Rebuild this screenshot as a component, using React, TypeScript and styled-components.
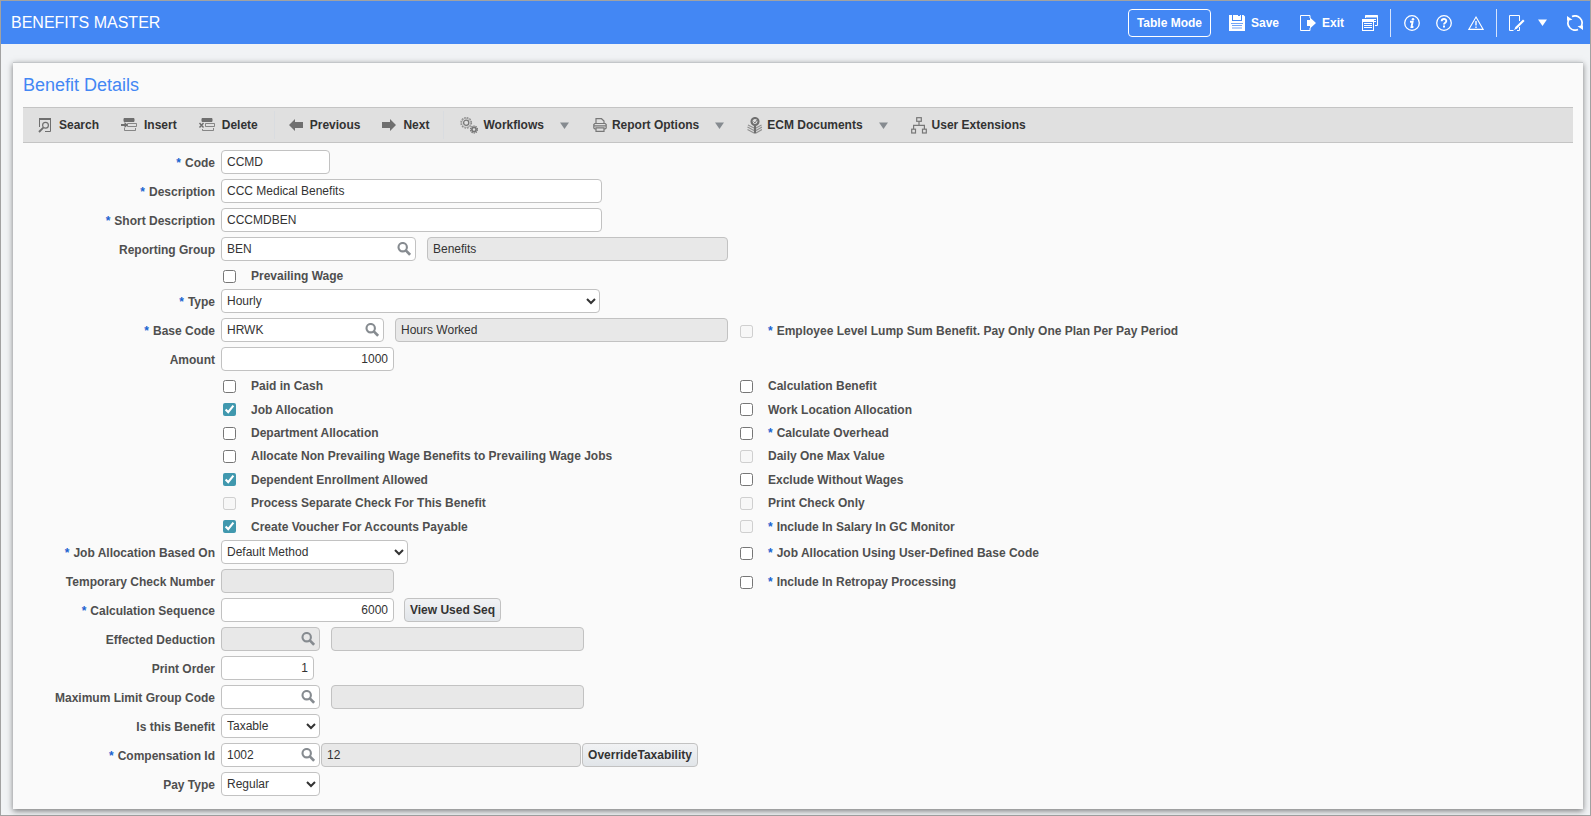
import React, { useId, useState } from 'react';
import styled, { createGlobalStyle } from 'styled-components';

const GlobalStyle = createGlobalStyle`
  * { box-sizing: border-box; }
  body {
    margin: 0;
    background: #f1f3f5;
    color: #333;
    font: 12px/16px "Liberation Sans", Arial, sans-serif;
  }
  input, select, button { font: inherit; color: inherit; }
`;

const Page = styled.div`
  display: flex;
  flex-direction: column;
  min-height: 100vh;
  border: 1px solid #a2a2a2;
`;

const Header = styled.header`
  display: flex;
  align-items: center;
  justify-content: space-between;
  height: 43px;
  padding: 0 7px 0 10px;
  background: #4387f4;
  color: #fff;
`;

const Title = styled.h1`
  margin: 0;
  font-size: 16px;
  line-height: 20px;
  font-weight: 400;
`;

const HeaderActions = styled.div`
  display: flex;
  align-items: center;
`;

const ModeButton = styled.button`
  height: 28px;
  width: 83px;
  margin-right: 18px;
  padding: 0;
  border: 1px solid #fff;
  border-radius: 4px;
  background: transparent;
  font-weight: 700;
`;

const HeaderButton = styled.button<{ $gap?: number }>`
  display: flex;
  align-items: center;
  gap: 6px;
  margin-right: ${(p) => p.$gap ?? 16}px;
  padding: 0;
  border: 0;
  background: transparent;
  font-weight: 700;
  svg { display: block; }
`;

const HeaderRule = styled.span<{ $gap: number }>`
  width: 1px;
  height: 28px;
  margin-right: ${(p) => p.$gap}px;
  background: #d5e3fc;
`;

const Card = styled.main`
  margin: 18px 7px 6px 12px;
  padding: 0 10px 13px;
  border-top: 1px solid #c3c6c9;
  background: #fafafa;
  box-shadow: 0 2px 6px rgba(0, 0, 0, 0.5);
`;

const SectionTitle = styled.h2`
  margin: 0;
  padding: 11px 0;
  color: #4387f4;
  font-size: 18px;
  line-height: 22px;
  font-weight: 400;
`;

const Toolbar = styled.div`
  display: flex;
  align-items: center;
  height: 36px;
  margin-bottom: 7px;
  padding-left: 15px;
  border: 1px solid #c4c4c4;
  border-width: 1px 0;
  background: #e0e0e0;
`;

const ToolButton = styled.button<{ $gap: number; $inner?: number }>`
  display: flex;
  align-items: center;
  gap: ${(p) => p.$inner ?? 5}px;
  margin-right: ${(p) => p.$gap}px;
  padding: 0;
  border: 0;
  background: transparent;
  color: #333;
  font-weight: 700;
  white-space: nowrap;
  svg { display: block; flex: none; }
`;

const MenuButton = styled(ToolButton)`
  svg:last-child { margin-left: 11px; }
`;

const ToolRule = styled.span<{ $gap: number }>`
  width: 1px;
  height: 28px;
  margin-right: ${(p) => p.$gap}px;
  background: #d9dce0;
`;

const Form = styled.form`
  display: flex;
  flex-direction: column;
  gap: 5px;
`;

const Row = styled.div`
  display: grid;
  grid-template-columns: 192px 513px 1fr;
  column-gap: 6px;
  align-items: center;
`;

const Checks = styled.div`
  display: grid;
  grid-auto-rows: 1fr;
  min-height: 159px;
  row-gap: 5px;
`;

const Caption = styled.label`
  padding-top: 2px;
  color: #4f4f4f;
  font-weight: 700;
  text-align: right;
  white-space: nowrap;
`;

const Star = styled.span`
  margin-right: 4px;
  color: #1a63d0;
`;

const Fields = styled.div<{ $gap?: number }>`
  display: flex;
  grid-column: 2;
  gap: ${(p) => p.$gap ?? 11}px;
`;

const Box = styled.input<{ $w: number; $right?: boolean }>`
  width: ${(p) => p.$w}px;
  height: 24px;
  padding: 0 5px 1px;
  border: 1px solid #c2c2c2;
  border-radius: 4px;
  background: #fff;
  outline: none;
  text-align: ${(p) => (p.$right ? 'right' : 'left')};
  &:read-only { background: #e8e8e8; }
`;

const LookupShell = styled.div<{ $w: number; $off?: boolean }>`
  display: flex;
  align-items: center;
  width: ${(p) => p.$w}px;
  height: 24px;
  padding-right: 4px;
  border: 1px solid #c2c2c2;
  border-radius: 4px;
  background: ${(p) => (p.$off ? '#e8e8e8' : '#fff')};
`;

const LookupInput = styled.input`
  flex: 1;
  min-width: 0;
  padding: 0 5px 1px;
  border: 0;
  background: transparent;
  outline: none;
`;

const LookupButton = styled.button`
  padding: 0;
  border: 0;
  background: transparent;
  svg { display: block; }
`;

const Select = styled.select<{ $w: number }>`
  width: ${(p) => p.$w}px;
  height: 24px;
  padding: 0 0 1px 1px;
  border: 1px solid #c2c2c2;
  border-radius: 4px;
  background: #fff;
`;

const PushButton = styled.button<{ $w: number }>`
  width: ${(p) => p.$w}px;
  height: 24px;
  padding: 0 0 1px;
  border: 1px solid #c2c2c2;
  border-radius: 4px;
  background: linear-gradient(#f1f2f4, #e1e5e9);
  font-weight: 700;
  white-space: nowrap;
`;

const CheckLabel = styled.label<{ $col: number }>`
  display: flex;
  align-items: center;
  grid-column: ${(p) => p.$col};
  height: 18px;
  padding-top: 2px;
  padding-left: ${(p) => (p.$col === 2 ? 2 : 0)}px;
  gap: 15px;
  color: #4f4f4f;
  font-weight: 700;
  white-space: nowrap;
  input {
    flex: none;
    width: 13px;
    height: 13px;
    margin: 0;
    accent-color: #4098ae;
  }
`;

const G = '#6f6f6f';

const MagnifierIcon = () => (
  <svg width="14" height="14" viewBox="0 0 14 14" fill="none" stroke="#868b90">
    <circle cx="5.7" cy="5.2" r="4.2" strokeWidth="2.1" />
    <path d="M8.800 8.400l4.300 4.400" strokeWidth="2.700" />
  </svg>
);
const Triangle = ({ fill }: { fill: string }) => (
  <svg width="9" height="7" viewBox="0 0 9 7"><path d="M0 .5h9L4.500 7z" fill={fill} /></svg>
);
const SaveIcon = () => (
  <svg width="16" height="16" viewBox="0 0 16 16" fill="#fff">
    <path d="M0 0h3v6h10V0h1.500L16 1.500V16H0z" />
    <path d="M4 0h5v1h2v3H9v1H4zM11 0h1v5H9V4h2z" />
    <path d="M2 8h12v1H2zM3 10h10v1H3zM3 12.500h10v1H3z" fill="#4387f4" opacity=".75" />
  </svg>
);
const ExitIcon = () => (
  <svg width="16" height="16" viewBox="0 0 16 16">
    <path d="M10 3V.5H.5v15H10V13" fill="none" stroke="#fff" />
    <path d="M7 5h3V2.500L16 8l-6 5.500V11H7z" fill="#fff" />
  </svg>
);
const FormsIcon = () => (
  <svg width="16" height="16" viewBox="0 0 16 16" fill="none" stroke="#fff">
    <path d="M3.500 3V.5h12v10H13" />
    <path d="M3 1.500h13" strokeWidth="2" />
    <path d="M12 4.500h2M12 6.500h2" />
    <rect x=".5" y="4.500" width="11" height="11" />
    <path d="M0 6h12" strokeWidth="2" />
    <path d="M2 8.500h8M2 10.500h8M2 12.500h8" />
  </svg>
);
const InfoIcon = () => (
  <svg width="16" height="16" viewBox="0 0 16 16">
    <circle cx="8" cy="8" r="7.300" fill="none" stroke="#fff" strokeWidth="1.300" />
    <circle cx="9" cy="4.200" r="1.300" fill="#fff" />
    <path d="M6 6.800h2.600L7.500 12h1.900" fill="none" stroke="#fff" strokeWidth="1.900" />
  </svg>
);
const HelpIcon = () => (
  <svg width="16" height="16" viewBox="0 0 16 16" fill="none" stroke="#fff">
    <circle cx="8" cy="8" r="7.300" strokeWidth="1.300" />
    <path d="M5.700 6.300C5.700 3.300 10.300 3.300 10.300 6c0 1.700-2.300 1.700-2.300 3.600" strokeWidth="1.900" />
    <path d="M8 10.600v2" strokeWidth="2" />
  </svg>
);
const WarnIcon = () => (
  <svg width="16" height="16" viewBox="0 0 16 16" fill="none" stroke="#fff">
    <path d="M8 2L15.200 14.400H.8z" strokeWidth="1.100" />
    <path d="M8 6v4.500M8 11.500V13" strokeWidth="1.400" />
  </svg>
);
const EditIcon = () => (
  <svg width="16" height="16" viewBox="0 0 16 16" fill="none" stroke="#fff">
    <path d="M10.500 6V.5H.5v15h4M10.500 12v3.500H8" />
    <path d="M14.800 5.200L7 13" strokeWidth="2.200" />
    <path d="M6.700 11.800L5 15l3.200-1.500z" fill="#fff" stroke="none" />
  </svg>
);
const RefreshIcon = () => (
  <svg width="16" height="16" viewBox="0 0 16 16">
    <path d="M5 1.600A7 7 0 0 1 14.300 11M11 14.400A7 7 0 0 1 1.700 5" fill="none" stroke="#fff" strokeWidth="1.700" />
    <path d="M10.500 11.200l5.500-1V15zM5.500 4.800L0 5.800V1z" fill="#fff" />
  </svg>
);

const SearchPageIcon = () => (
  <svg width="16" height="16" viewBox="0 0 16 16" fill="none" stroke={G}>
    <path d="M1.500 10V1.500h11v13H7" />
    <path d="M1 2h12" strokeWidth="2" />
    <circle cx="7.500" cy="8.300" r="2.900" strokeWidth="1.200" />
    <path d="M5.300 10.700L1 15" strokeWidth="1.900" />
  </svg>
);
const InsertIcon = () => (
  <svg width="18" height="16" viewBox="0 0 18 16" fill="none" stroke={G}>
    <path d="M4 1.500h10v3H4z" fill={G} />
    <path d="M7.500 6.500h9v3h-9zM4.500 11v2.500h11V11" opacity=".8" />
    <path d="M1 8h5" strokeWidth="2" />
    <path d="M4.500 5L8 8l-3.500 3z" fill={G} stroke="none" />
  </svg>
);
const DeleteIcon = () => (
  <svg width="18" height="16" viewBox="0 0 18 16" fill="none" stroke={G}>
    <path d="M4 1.500h10v3H4z" fill={G} />
    <path d="M7.500 6.500h9v3h-9zM4.500 12v1.500h11V11" opacity=".8" />
    <path d="M1.500 6l4 4.500M5.500 6l-4 4.500" strokeWidth="1.400" />
  </svg>
);
const ArrowIcon = ({ right }: { right?: boolean }) => (
  <svg width="14" height="12" viewBox="0 0 14 12">
    <path d={right ? 'M14 6L8 0v3H0v6h8v3z' : 'M0 6l6-6v3h8v6H6v3z'} fill={G} />
  </svg>
);
const GearsIcon = () => (
  <svg width="18" height="18" viewBox="0 0 18 18" fill="none" stroke="#777">
    <circle cx="6.200" cy="6.800" r="5.300" strokeWidth="1.200" strokeDasharray="1.700 1.070" opacity=".8" />
    <circle cx="6.200" cy="6.800" r="4.500" strokeWidth=".8" opacity=".6" />
    <circle cx="6.200" cy="6.800" r="2.600" strokeWidth="1.300" />
    <circle cx="14" cy="13.500" r="3.500" strokeWidth="1.200" strokeDasharray="1.400 .8" />
    <circle cx="14" cy="13.500" r="2.100" strokeWidth="1.700" />
  </svg>
);
const PrinterIcon = () => (
  <svg width="14" height="14" viewBox="0 0 14 14" fill="none" stroke="#777" strokeWidth="1.200">
    <path d="M3 5V.7h5.500L11 3v2" />
    <path d="M3 11H1.800L.8 10V6.500l1-1h10.400l1 1V10l-1 1H11M1 7.800h12" />
    <path d="M3 9.800h8v3.500H3z" />
  </svg>
);
const EcmIcon = () => (
  <svg width="15" height="17" viewBox="0 0 15 17" fill="none" stroke={G}>
    <circle cx="8" cy="4.500" r="3.500" strokeWidth="2.100" />
    <path d="M6.500 4.500L8 6l2-3" strokeWidth=".9" />
    <path d="M8 8.500v8" strokeWidth="2.200" />
    <path d="M.5 10L7 13.500M.5 12.500L7 16M15 10l-6 3.500M15 12.500L9 16M1 8l6 3M14.500 8L9 11" strokeWidth="1.200" opacity=".7" />
  </svg>
);
const TreeIcon = () => (
  <svg width="16" height="17" viewBox="0 0 16 17" fill="none" stroke="#777" strokeWidth="1.200">
    <rect x="5.700" y=".7" width="4.600" height="3.600" />
    <path d="M8 4.300V8M2.600 12V8.300h10.800V12" />
    <rect x=".7" y="12.200" width="3.800" height="3.800" />
    <rect x="11.500" y="12.200" width="3.800" height="3.800" />
  </svg>
);

type FieldProps = { label: string; required?: boolean; gap?: number; side?: React.ReactNode; children: (id: string) => React.ReactNode };

function Field({ label, required, gap, side, children }: FieldProps) {
  const id = useId();
  return (
    <Row>
      <Caption htmlFor={id}>{required && <Star>*</Star>}{label}</Caption>
      <Fields $gap={gap}>{children(id)}</Fields>
      {side}
    </Row>
  );
}

type CheckProps = { label: string; required?: boolean; checked?: boolean; disabled?: boolean };

function Check({ label, required, checked, disabled, col }: CheckProps & { col: number }) {
  const [on, setOn] = useState(!!checked);
  return (
    <CheckLabel $col={col}>
      <input type="checkbox" checked={on} disabled={disabled} onChange={(e) => setOn(e.target.checked)} />
      <span>{required && <Star>*</Star>}{label}</span>
    </CheckLabel>
  );
}

function Lookup({ id, width, value, label, off }: { id: string; width: number; value?: string; label: string; off?: boolean }) {
  return (
    <LookupShell $w={width} $off={off}>
      <LookupInput id={id} defaultValue={value} disabled={off} />
      <LookupButton type="button" aria-label={`Look up ${label}`} disabled={off}><MagnifierIcon /></LookupButton>
    </LookupShell>
  );
}

const checkPairs: [CheckProps, CheckProps][] = [
  [{ label: 'Paid in Cash' }, { label: 'Calculation Benefit' }],
  [{ label: 'Job Allocation', checked: true }, { label: 'Work Location Allocation' }],
  [{ label: 'Department Allocation' }, { label: 'Calculate Overhead', required: true }],
  [{ label: 'Allocate Non Prevailing Wage Benefits to Prevailing Wage Jobs' }, { label: 'Daily One Max Value', disabled: true }],
  [{ label: 'Dependent Enrollment Allowed', checked: true }, { label: 'Exclude Without Wages' }],
  [{ label: 'Process Separate Check For This Benefit', disabled: true }, { label: 'Print Check Only', disabled: true }],
  [{ label: 'Create Voucher For Accounts Payable', checked: true }, { label: 'Include In Salary In GC Monitor', required: true, disabled: true }],
];

export default function App() {
  return (
    <>
      <GlobalStyle />
      <Page>
        <Header>
          <Title>BENEFITS MASTER</Title>
          <HeaderActions>
            <ModeButton type="button">Table Mode</ModeButton>
            <HeaderButton type="button" $gap={21}><SaveIcon />Save</HeaderButton>
            <HeaderButton type="button" $gap={18}><ExitIcon />Exit</HeaderButton>
            <HeaderButton type="button" $gap={12} aria-label="Forms"><FormsIcon /></HeaderButton>
            <HeaderRule $gap={13} />
            <HeaderButton type="button" aria-label="Information"><InfoIcon /></HeaderButton>
            <HeaderButton type="button" aria-label="Help"><HelpIcon /></HeaderButton>
            <HeaderButton type="button" $gap={12} aria-label="Warnings"><WarnIcon /></HeaderButton>
            <HeaderRule $gap={12} />
            <HeaderButton type="button" $gap={13} aria-label="Edit"><EditIcon /></HeaderButton>
            <HeaderButton type="button" $gap={20} aria-label="Edit options"><Triangle fill="#fff" /></HeaderButton>
            <HeaderButton type="button" $gap={0} aria-label="Refresh"><RefreshIcon /></HeaderButton>
          </HeaderActions>
        </Header>

        <Card>
          <SectionTitle>Benefit Details</SectionTitle>
          <Toolbar role="toolbar" aria-label="Benefit actions">
            <ToolButton type="button" $gap={21}><SearchPageIcon />Search</ToolButton>
            <ToolButton type="button" $gap={21} $inner={6}><InsertIcon />Insert</ToolButton>
            <ToolButton type="button" $gap={16} $inner={6}><DeleteIcon />Delete</ToolButton>
            <ToolRule $gap={14} />
            <ToolButton type="button" $gap={22} $inner={7}><ArrowIcon />Previous</ToolButton>
            <ToolButton type="button" $gap={14} $inner={7}><ArrowIcon right />Next</ToolButton>
            <ToolRule $gap={16} />
            <MenuButton type="button" $gap={24}><GearsIcon />Workflows<Triangle fill="#868b90" /></MenuButton>
            <MenuButton type="button" $gap={23}><PrinterIcon />Report Options<Triangle fill="#868b90" /></MenuButton>
            <MenuButton type="button" $gap={23}><EcmIcon />ECM Documents<Triangle fill="#868b90" /></MenuButton>
            <ToolButton type="button" $gap={0}><TreeIcon />User Extensions</ToolButton>
          </Toolbar>

          <Form onSubmit={(e) => e.preventDefault()}>
            <Field label="Code" required>{(id) => <Box id={id} $w={109} defaultValue="CCMD" />}</Field>
            <Field label="Description" required>{(id) => <Box id={id} $w={381} defaultValue="CCC Medical Benefits" />}</Field>
            <Field label="Short Description" required>{(id) => <Box id={id} $w={381} defaultValue="CCCMDBEN" />}</Field>
            <Field label="Reporting Group">
              {(id) => (
                <>
                  <Lookup id={id} width={195} value="BEN" label="Reporting Group" />
                  <Box $w={301} readOnly aria-label="Reporting Group name" value="Benefits" />
                </>
              )}
            </Field>
            <Row><Check col={2} label="Prevailing Wage" /></Row>
            <Field label="Type" required>
              {(id) => <Select id={id} $w={379}><option>Hourly</option></Select>}
            </Field>
            <Field
              label="Base Code"
              required
              side={<Check col={3} required disabled label="Employee Level Lump Sum Benefit. Pay Only One Plan Per Pay Period" />}
            >
              {(id) => (
                <>
                  <Lookup id={id} width={163} value="HRWK" label="Base Code" />
                  <Box $w={333} readOnly aria-label="Base Code name" value="Hours Worked" />
                </>
              )}
            </Field>
            <Field label="Amount">{(id) => <Box id={id} $w={173} $right defaultValue="1000" />}</Field>

            <Checks>
              {checkPairs.map(([left, right]) => (
                <Row key={left.label}>
                  <Check col={2} {...left} />
                  <Check col={3} {...right} />
                </Row>
              ))}
            </Checks>

            <Field label="Job Allocation Based On" required side={<Check col={3} required label="Job Allocation Using User-Defined Base Code" />}>
              {(id) => <Select id={id} $w={187}><option>Default Method</option></Select>}
            </Field>
            <Field label="Temporary Check Number" side={<Check col={3} required label="Include In Retropay Processing" />}>
              {(id) => <Box id={id} $w={173} readOnly />}
            </Field>
            <Field label="Calculation Sequence" required gap={10}>
              {(id) => (
                <>
                  <Box id={id} $w={173} $right defaultValue="6000" />
                  <PushButton type="button" $w={97}>View Used Seq</PushButton>
                </>
              )}
            </Field>
            <Field label="Effected Deduction">
              {(id) => (
                <>
                  <Lookup id={id} width={99} off label="Effected Deduction" />
                  <Box $w={253} readOnly aria-label="Effected Deduction name" />
                </>
              )}
            </Field>
            <Field label="Print Order">{(id) => <Box id={id} $w={93} $right defaultValue="1" />}</Field>
            <Field label="Maximum Limit Group Code">
              {(id) => (
                <>
                  <Lookup id={id} width={99} label="Maximum Limit Group Code" />
                  <Box $w={253} readOnly aria-label="Maximum Limit Group name" />
                </>
              )}
            </Field>
            <Field label="Is this Benefit">
              {(id) => <Select id={id} $w={99}><option>Taxable</option></Select>}
            </Field>
            <Field label="Compensation Id" required gap={1}>
              {(id) => (
                <>
                  <Lookup id={id} width={99} value="1002" label="Compensation Id" />
                  <Box $w={260} readOnly aria-label="Compensation name" value="12" />
                  <PushButton type="button" $w={116}>OverrideTaxability</PushButton>
                </>
              )}
            </Field>
            <Field label="Pay Type">
              {(id) => <Select id={id} $w={99}><option>Regular</option></Select>}
            </Field>
          </Form>
        </Card>
      </Page>
    </>
  );
}
